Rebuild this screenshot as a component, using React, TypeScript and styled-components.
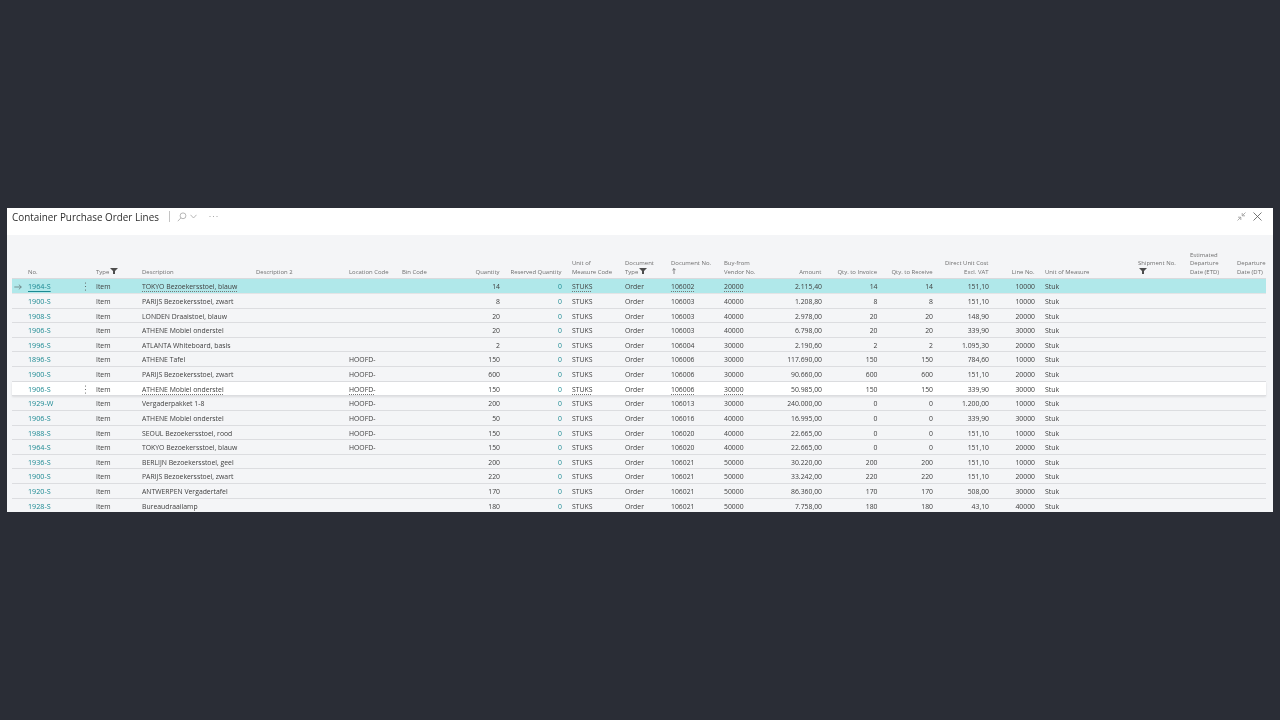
import React from "react";
import styled, { createGlobalStyle } from "styled-components";

const Global = createGlobalStyle`
  html, body { margin: 0; padding: 0; height: 100%; background: #2a2d36; }
  #root { height: 100%; }
`;

const COLS = "16px 68px 46px 114px 93px 53px 50px 58px 62px 53px 46px 53px 51px 57px 55.5px 55.5px 56px 46px 93px 52px 47px 29px";

const Stage = styled.div`
  height: 720px;
  display: flex;
  align-items: center;
  justify-content: center;
  font-family: "Open Sans", "Noto Sans", sans-serif;
`;
const Card = styled.div`
  width: 1266px;
  height: 304px;
  background: #f4f5f7;
  overflow: hidden;
  display: flex;
  flex-direction: column;
  filter: blur(0.35px);
`;
const TitleBar = styled.div`
  height: 27px;
  flex: none;
  background: #fff;
  display: flex;
  align-items: flex-start;
  padding: 2px 11px 0 5px;
  box-sizing: border-box;
`;
const Title = styled.div`
  font-size: 9.9px;
  line-height: 15px;
  color: #2e2e2e;
  font-weight: 500;
  white-space: nowrap;
`;
const Divider = styled.div`
  width: 1px;
  height: 11px;
  margin: 1px 7px 0 10px;
  background: #c4c4c4;
`;
const ToolIcons = styled.div`
  display: flex;
  align-items: center;
  height: 11px;
  margin-top: 1px;
  color: #9a9a9a;
`;
const Spacer = styled.div`
  flex: 1;
`;
const Table = styled.div`
  padding: 0 7px 0 5px;
  display: flex;
  flex-direction: column;
`;
const HeaderRow = styled.div`
  display: grid;
  grid-template-columns: ${COLS};
  height: 44.3px;
  align-items: end;
  border-bottom: 1px solid #d9dadd;
  box-sizing: border-box;
`;
const HeaderCell = styled.div<{ $right?: boolean }>`
  font-size: 5.95px;
  line-height: 8.6px;
  color: #6f6f6f;
  padding-bottom: 2px;
  white-space: pre-line;
  text-align: ${(p) => (p.$right ? "right" : "left")};
  padding-right: ${(p) => (p.$right ? "10.5px" : "0")};
  margin-left: ${(p) => (p.$right ? "-20px" : "0")};
`;
const FilterGlyph = styled.svg`
  width: 8px;
  height: 6px;
  margin-left: 1px;
  vertical-align: -0.5px;
`;
const SortGlyph = styled.svg`
  width: 4px;
  height: 6px;
  margin-left: 1px;
  vertical-align: -0.5px;
`;
const Row = styled.div<{ $variant?: "active" | "focus" }>`
  display: grid;
  grid-template-columns: ${COLS};
  height: 14.63px;
  box-sizing: border-box;
  align-items: center;
  position: relative;
  padding-top: 1px;
  border-bottom: 1px solid ${(p) => (p.$variant === "active" ? "#e3e4e6" : "#dcdde0")};
  background: ${(p) => (p.$variant === "active" ? "#b0e8ea" : p.$variant === "focus" ? "#fff" : "transparent")};
  box-shadow: ${(p) => (p.$variant === "focus" ? "0 1px 2px rgba(0,0,0,0.1)" : "none")};
`;
const Cell = styled.div<{ $right?: boolean; $dotted?: boolean; $link?: boolean }>`
  font-size: 6.85px;
  line-height: 13px;
  color: ${(p) => (p.$link ? "#1c8a93" : "#404040")};
  white-space: nowrap;
  text-align: ${(p) => (p.$right ? "right" : "left")};
  padding-right: ${(p) => (p.$right ? "10px" : "0")};
  text-decoration: ${(p) => (p.$dotted ? "underline dotted #777" : "none")};
  text-underline-offset: 1.5px;
  min-width: 0;
`;
const NoCell = styled.div`
  display: flex;
  align-items: center;
  justify-content: space-between;
  padding-right: 9px;
`;
const NoLink = styled.span<{ $under?: boolean }>`
  font-size: 7.2px;
  line-height: 13px;
  color: #1c8a93;
  text-decoration: ${(p) => (p.$under ? "underline" : "none")};
  text-underline-offset: 1.5px;
`;
const ArrowCell = styled.div`
  display: flex;
  align-items: center;
  justify-content: center;
  padding-right: 5px;
  color: #5f6b6d;
`;

type Mark = "filter" | "sort" | undefined;
const header: [string, boolean?, Mark?][] = [
  [""],
  ["No."],
  ["Type", false, "filter"],
  ["Description"],
  ["Description 2"],
  ["Location Code"],
  ["Bin Code"],
  ["Quantity", true],
  ["Reserved Quantity", true],
  ["Unit of\nMeasure Code"],
  ["Document\nType", false, "filter"],
  ["Document No.\n", false, "sort"],
  ["Buy-from\nVendor No."],
  ["Amount", true],
  ["Qty. to Invoice", true],
  ["Qty. to Receive", true],
  ["Direct Unit Cost\nExcl. VAT", true],
  ["Line No.", true],
  ["Unit of Measure"],
  ["Shipment No.\n", false, "filter"],
  ["Estimated\nDeparture\nDate (ETD)"],
  ["Departure\nDate (DT)"],
];

type R = [string, string, string, string, string, string, string, string, string, string, string, string];
const rows: R[] = [
  ["1964-S", "TOKYO Bezoekersstoel, blauw", "", "14", "106002", "20000", "2.115,40", "14", "14", "151,10", "10000", "a"],
  ["1900-S", "PARIJS Bezoekersstoel, zwart", "", "8", "106003", "40000", "1.208,80", "8", "8", "151,10", "10000", ""],
  ["1908-S", "LONDEN Draaistoel, blauw", "", "20", "106003", "40000", "2.978,00", "20", "20", "148,90", "20000", ""],
  ["1906-S", "ATHENE Mobiel onderstel", "", "20", "106003", "40000", "6.798,00", "20", "20", "339,90", "30000", ""],
  ["1996-S", "ATLANTA Whiteboard, basis", "", "2", "106004", "30000", "2.190,60", "2", "2", "1.095,30", "20000", ""],
  ["1896-S", "ATHENE Tafel", "HOOFD-", "150", "106006", "30000", "117.690,00", "150", "150", "784,60", "10000", ""],
  ["1900-S", "PARIJS Bezoekersstoel, zwart", "HOOFD-", "600", "106006", "30000", "90.660,00", "600", "600", "151,10", "20000", ""],
  ["1906-S", "ATHENE Mobiel onderstel", "HOOFD-", "150", "106006", "30000", "50.985,00", "150", "150", "339,90", "30000", "f"],
  ["1929-W", "Vergaderpakket 1-8", "HOOFD-", "200", "106013", "30000", "240.000,00", "0", "0", "1.200,00", "10000", ""],
  ["1906-S", "ATHENE Mobiel onderstel", "HOOFD-", "50", "106016", "40000", "16.995,00", "0", "0", "339,90", "30000", ""],
  ["1988-S", "SEOUL Bezoekersstoel, rood", "HOOFD-", "150", "106020", "40000", "22.665,00", "0", "0", "151,10", "10000", ""],
  ["1964-S", "TOKYO Bezoekersstoel, blauw", "HOOFD-", "150", "106020", "40000", "22.665,00", "0", "0", "151,10", "20000", ""],
  ["1936-S", "BERLIJN Bezoekersstoel, geel", "", "200", "106021", "50000", "30.220,00", "200", "200", "151,10", "10000", ""],
  ["1900-S", "PARIJS Bezoekersstoel, zwart", "", "220", "106021", "50000", "33.242,00", "220", "220", "151,10", "20000", ""],
  ["1920-S", "ANTWERPEN Vergadertafel", "", "170", "106021", "50000", "86.360,00", "170", "170", "508,00", "30000", ""],
  ["1928-S", "Bureaudraailamp", "", "180", "106021", "50000", "7.758,00", "180", "180", "43,10", "40000", ""],
];

const Filter = () => (
  <FilterGlyph viewBox="0 0 8 6">
    <path d="M0 0h8L5 3v3H3V3z" fill="#4d4d4d" />
  </FilterGlyph>
);
const Sort = () => (
  <SortGlyph viewBox="0 0 4 6">
    <path d="M2 6V0.6M0.4 2.2L2 0.6L3.6 2.2" fill="none" stroke="#555" strokeWidth="0.7" />
  </SortGlyph>
);
const Dots = () => (
  <svg width="3" height="9" viewBox="0 0 3 9">
    <circle cx="1.5" cy="1" r="0.55" fill="#555" />
    <circle cx="1.5" cy="4.5" r="0.55" fill="#555" />
    <circle cx="1.5" cy="8" r="0.55" fill="#555" />
  </svg>
);

export default function App() {
  return (
    <>
      <Global />
      <Stage>
        <Card>
          <TitleBar>
            <Title>Container Purchase Order Lines</Title>
            <Divider />
            <ToolIcons>
              <svg width="10" height="10" viewBox="0 0 10 10" fill="none" stroke="currentColor" strokeWidth="0.7">
                <circle cx="6" cy="3.8" r="2.9" />
                <path d="M3.9 5.9L0.8 9.2" />
              </svg>
              <svg width="7" height="5" viewBox="0 0 7 5" fill="none" stroke="currentColor" strokeWidth="0.7" style={{ marginLeft: 3 }}>
                <path d="M0.5 0.8L3.5 4L6.5 0.8" />
              </svg>
              <svg width="9" height="3" viewBox="0 0 9 3" fill="#999" style={{ marginLeft: 12 }}>
                <circle cx="1" cy="1.5" r="0.55" />
                <circle cx="4.5" cy="1.5" r="0.55" />
                <circle cx="8" cy="1.5" r="0.55" />
              </svg>
            </ToolIcons>
            <Spacer />
            <ToolIcons>
              <svg width="9" height="9" viewBox="0 0 9 9" fill="none" stroke="#8a8a8a" strokeWidth="0.7">
                <path d="M0.5 8.5L3.5 5.5M3.8 8V5.2H1M8.5 0.5L5.5 3.5M5.2 1V3.8H8" />
              </svg>
              <svg width="9" height="9" viewBox="0 0 9 9" fill="none" stroke="#555" strokeWidth="0.8" style={{ marginLeft: 7 }}>
                <path d="M0.5 0.5L8.5 8.5M8.5 0.5L0.5 8.5" />
              </svg>
            </ToolIcons>
          </TitleBar>
          <Table>
            <HeaderRow>
              {header.map(([t, r, m], i) => (
                <HeaderCell key={i} $right={r}>
                  {t}
                  {m === "filter" ? <Filter /> : m === "sort" ? <Sort /> : null}
                </HeaderCell>
              ))}
            </HeaderRow>
            {rows.map((r, i) => {
              const [no, desc, loc, qty, doc, vend, amt, inv, rec, cost, line, flag] = r;
              const variant = flag === "a" ? "active" : flag === "f" ? "focus" : undefined;
              const d = !!flag;
              return (
                <Row key={i} $variant={variant}>
                  <ArrowCell>
                    {flag === "a" ? (
                      <svg width="8" height="6" viewBox="0 0 8 6" fill="none" stroke="currentColor" strokeWidth="0.7">
                        <path d="M0.3 3H7.3M4.8 0.6L7.3 3L4.8 5.4" />
                      </svg>
                    ) : null}
                  </ArrowCell>
                  <NoCell>
                    <NoLink $under={flag === "a"}>{no}</NoLink>
                    {d ? <Dots /> : null}
                  </NoCell>
                  <Cell>Item</Cell>
                  <Cell $dotted={d}>{desc}</Cell>
                  <Cell />
                  <Cell $dotted={d}>{loc}</Cell>
                  <Cell />
                  <Cell $right>{qty}</Cell>
                  <Cell $right $link>0</Cell>
                  <Cell $dotted={d}>STUKS</Cell>
                  <Cell>Order</Cell>
                  <Cell $dotted={d}>{doc}</Cell>
                  <Cell $dotted={d}>{vend}</Cell>
                  <Cell $right>{amt}</Cell>
                  <Cell $right>{inv}</Cell>
                  <Cell $right>{rec}</Cell>
                  <Cell $right>{cost}</Cell>
                  <Cell $right>{line}</Cell>
                  <Cell>Stuk</Cell>
                  <Cell />
                  <Cell />
                  <Cell />
                </Row>
              );
            })}
          </Table>
        </Card>
      </Stage>
    </>
  );
}
